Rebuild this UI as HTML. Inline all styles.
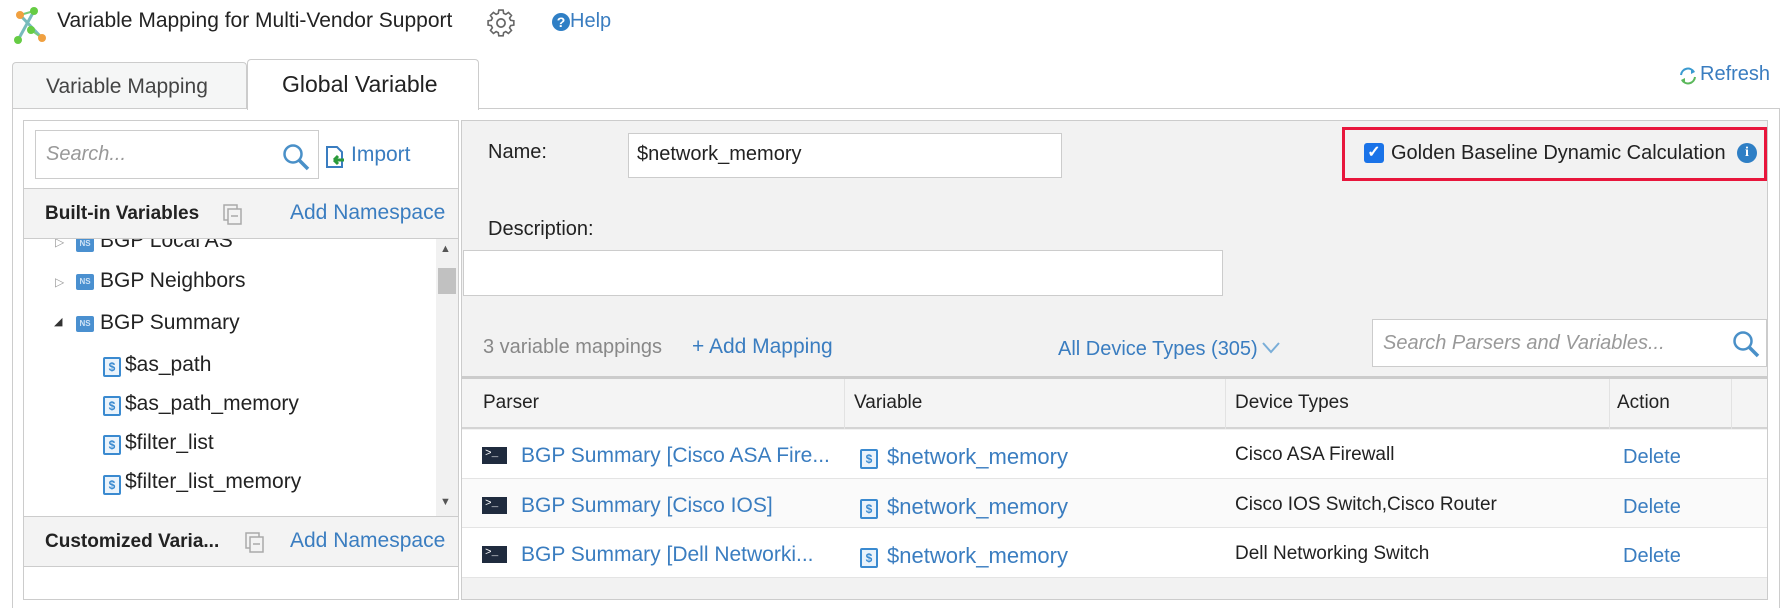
<!DOCTYPE html>
<html><head><meta charset="utf-8"><style>
*{box-sizing:border-box;margin:0;padding:0}
body{width:1788px;height:593px;overflow:hidden;background:#fff;font-family:"Liberation Sans",Arial,sans-serif;color:#222;position:relative}
.a{position:absolute;white-space:nowrap}
.blue{color:#3a7dc0}
.ns{position:absolute;width:18px;height:16px;background:#4a90d0;border-radius:2px;color:#cfe3f6;font-size:8px;font-weight:bold;text-align:center;line-height:16px}
.s{position:absolute;width:18px;height:20px;border:2px solid #3a8ad0;border-radius:2px;background:#eaf3fb;color:#3a8ad0;font-size:12px;font-weight:bold;text-align:center;line-height:16px}
.term{position:absolute;width:25px;height:17px;background:#1f2b3e;color:#fff;font-size:11px;line-height:15px;padding-left:3px;font-family:"Liberation Mono",monospace}
.line{position:absolute;background:#ddd}
</style></head><body>
<svg class="a" style="left:12px;top:6px" width="38" height="40" viewBox="0 0 38 40">
<line x1="8" y1="9" x2="30" y2="32" stroke="#7bb" stroke-width="3"/><line x1="22" y1="5" x2="6" y2="34" stroke="#7bb" stroke-width="3"/><line x1="8" y1="9" x2="22" y2="5" stroke="#7c7" stroke-width="2"/><line x1="19" y1="24" x2="30" y2="32" stroke="#7c7" stroke-width="2"/>
<circle cx="8" cy="9" r="4" fill="#f0a040"/><circle cx="22" cy="5" r="4" fill="#6c4"/><circle cx="19" cy="24" r="4" fill="#6c4"/><circle cx="6" cy="34" r="4" fill="#6c4"/><circle cx="30" cy="32" r="4" fill="#f0a040"/></svg>
<div class="a" style="left:57px;top:9px;font-size:21px">Variable Mapping for Multi-Vendor Support</div>
<svg class="a" style="left:487px;top:9px" width="28" height="28" viewBox="0 0 24 24"><path fill="none" stroke="#666" stroke-width="1.5" d="M10 2h4l.5 3 2 1 2.5-1.8 2.8 2.8L20 9.5l1 2 3 .5v4l-3 .5-1 2 1.8 2.5-2.8 2.8-2.5-1.8-2 1-.5 3h-4l-.5-3-2-1-2.5 1.8-2.8-2.8L4 18.5l-1-2-3-.5v-4l3-.5 1-2L2.2 7 5 4.2 7.5 6l2-1z" transform="scale(.92) translate(1 -1)"/><circle cx="12" cy="12" r="3.5" fill="none" stroke="#666" stroke-width="1.5"/></svg>
<div class="a" style="left:552px;top:13px;width:18px;height:18px;border-radius:50%;background:#2f7fc5;color:#fff;font-size:14px;font-weight:bold;text-align:center;line-height:18px">?</div>
<div class="a blue" style="left:570px;top:10px;font-size:20px">Help</div>
<div class="a" style="left:12px;top:62px;width:235px;height:47px;background:#f5f6f6;border:1px solid #ccc;border-bottom:none;border-radius:4px 4px 0 0"></div>
<div class="a" style="left:46px;top:75px;font-size:21px;color:#444">Variable Mapping</div>
<div class="line" style="left:12px;top:108px;width:1768px;height:1px;background:#ccc"></div>
<div class="a" style="left:247px;top:59px;width:232px;height:51px;background:#fff;border:1px solid #ccc;border-bottom:none;border-radius:4px 4px 0 0"></div>
<div class="a" style="left:282px;top:71px;font-size:23px">Global Variable</div>
<svg class="a" style="left:1678px;top:66px" width="20" height="20" viewBox="0 0 20 20"><path d="M3 9A7 7 0 0 1 16 6" fill="none" stroke="#3a9ad0" stroke-width="2"/><path d="M17 11A7 7 0 0 1 4 14" fill="none" stroke="#5bb85b" stroke-width="2"/><path d="M13 3l4 3-4 2z" fill="#3a9ad0"/><path d="M7 17l-4-3 4-2z" fill="#5bb85b"/></svg>
<div class="a blue" style="left:1700px;top:63px;font-size:20px">Refresh</div>
<div class="a" style="left:12px;top:108px;width:1768px;height:500px;border-left:1px solid #ccc;border-right:1px solid #ccc"></div>
<div class="a" style="left:23px;top:120px;width:436px;height:480px;border:1px solid #ccc;background:#fff"></div>
<div class="a" style="left:35px;top:130px;width:284px;height:49px;border:1px solid #ccc;background:#fff"></div>
<div class="a" style="left:46px;top:143px;font-size:20px;font-style:italic;color:#999">Search...</div>
<svg class="a" style="left:282px;top:143px" width="28" height="28" viewBox="0 0 28 28"><circle cx="11" cy="11" r="8.5" fill="none" stroke="#4a90c8" stroke-width="2.5"/><line x1="17" y1="17" x2="26" y2="26" stroke="#4a90c8" stroke-width="3.5"/></svg>
<svg class="a" style="left:325px;top:146px" width="22" height="22" viewBox="0 0 22 22"><path d="M2 1h10l5 5v15H2z" fill="#fff" stroke="#3a7dc0" stroke-width="2"/><path d="M9 14h10M9 14l4-4M9 14l4 4" stroke="#2a9a3a" stroke-width="3" fill="none"/></svg>
<div class="a blue" style="left:351px;top:143px;font-size:21px">Import</div>
<div class="a" style="left:24px;top:188px;width:434px;height:51px;background:#f3f3f3;border-top:1px solid #ccc;border-bottom:1px solid #ccc"></div>
<div class="a" style="left:45px;top:203px;font-size:19px;font-weight:bold">Built-in Variables</div>
<svg class="a" style="left:223px;top:204px" width="20" height="22"><rect x="1" y="1" width="13" height="15" fill="none" stroke="#aaa" stroke-width="1.5"/><rect x="5" y="5" width="13" height="15" fill="#f3f3f3" stroke="#aaa" stroke-width="1.5"/><line x1="8" y1="12" x2="15" y2="12" stroke="#aaa" stroke-width="1.5"/></svg>
<div class="a blue" style="left:290px;top:201px;font-size:21px">Add Namespace</div>
<div class="a" style="left:24px;top:239px;width:412px;height:277px;overflow:hidden">
  <div class="a" style="left:31px;top:-4px;color:#999;font-size:12px">▷</div><div class="ns" style="left:52px;top:-3px">NS</div><div class="a" style="left:76px;top:-10px;font-size:21px">BGP Local AS</div>
  <div class="a" style="left:31px;top:36px;color:#999;font-size:12px">▷</div><div class="ns" style="left:52px;top:35px">NS</div><div class="a" style="left:76px;top:30px;font-size:21px">BGP Neighbors</div>
  <div class="a" style="left:30px;top:76px;color:#333;font-size:11px">◢</div><div class="ns" style="left:52px;top:77px">NS</div><div class="a" style="left:76px;top:72px;font-size:21px">BGP Summary</div>
  <div class="s" style="left:79px;top:118px">$</div><div class="a" style="left:101px;top:114px;font-size:21px">$as_path</div>
  <div class="s" style="left:79px;top:157px">$</div><div class="a" style="left:101px;top:153px;font-size:21px">$as_path_memory</div>
  <div class="s" style="left:79px;top:196px">$</div><div class="a" style="left:101px;top:192px;font-size:21px">$filter_list</div>
  <div class="s" style="left:79px;top:236px">$</div><div class="a" style="left:101px;top:231px;font-size:21px">$filter_list_memory</div>
</div>
<div class="a" style="left:436px;top:239px;width:22px;height:277px;background:#f1f1f1"></div>
<div class="a" style="left:440px;top:243px;font-size:11px;color:#555">▲</div>
<div class="a" style="left:438px;top:268px;width:18px;height:26px;background:#c1c1c1"></div>
<div class="a" style="left:440px;top:496px;font-size:11px;color:#555">▼</div>
<div class="a" style="left:24px;top:516px;width:434px;height:51px;background:#f3f3f3;border-top:1px solid #ccc;border-bottom:1px solid #ccc"></div>
<div class="a" style="left:45px;top:531px;font-size:19px;font-weight:bold">Customized Varia...</div>
<svg class="a" style="left:245px;top:532px" width="20" height="22"><rect x="1" y="1" width="13" height="15" fill="none" stroke="#aaa" stroke-width="1.5"/><rect x="5" y="5" width="13" height="15" fill="#f3f3f3" stroke="#aaa" stroke-width="1.5"/><line x1="8" y1="12" x2="15" y2="12" stroke="#aaa" stroke-width="1.5"/></svg>
<div class="a blue" style="left:290px;top:529px;font-size:21px">Add Namespace</div>
<div class="a" style="left:461px;top:120px;width:1307px;height:480px;background:#f2f2f2;border:1px solid #ccc"></div>
<div class="a" style="left:488px;top:141px;font-size:20px">Name:</div>
<div class="a" style="left:628px;top:133px;width:434px;height:45px;background:#fff;border:1px solid #ccc"></div>
<div class="a" style="left:637px;top:143px;font-size:20px">$network_memory</div>
<div class="a" style="left:488px;top:218px;font-size:20px">Description:</div>
<div class="a" style="left:463px;top:250px;width:760px;height:46px;background:#fff;border:1px solid #ccc"></div>
<div class="a" style="left:1342px;top:127px;width:425px;height:54px;border:3px solid #e8163c"></div>
<div class="a" style="left:1364px;top:143px;width:20px;height:20px;background:#1a73e8;border-radius:3px;color:#fff;font-size:16px;font-weight:bold;text-align:center;line-height:20px">✓</div>
<div class="a" style="left:1391px;top:142px;font-size:20px">Golden Baseline Dynamic Calculation</div>
<div class="a" style="left:1737px;top:143px;width:20px;height:20px;border-radius:50%;background:#2f7fc5;color:#fff;font-size:14px;font-weight:bold;text-align:center;line-height:20px;font-family:'Liberation Serif',serif">i</div>
<div class="a" style="left:483px;top:336px;font-size:20px;color:#888">3 variable mappings</div>
<div class="a blue" style="left:692px;top:335px;font-size:21px">+ Add Mapping</div>
<div class="a blue" style="left:1058px;top:338px;font-size:20px">All Device Types (305)</div>
<svg class="a" style="left:1262px;top:342px" width="18" height="12"><path d="M1 1l8 9 8-9" fill="none" stroke="#7aaed8" stroke-width="2"/></svg>
<div class="a" style="left:1372px;top:319px;width:395px;height:48px;background:#fff;border:1px solid #ccc"></div>
<div class="a" style="left:1383px;top:332px;font-size:20px;font-style:italic;color:#999">Search Parsers and Variables...</div>
<svg class="a" style="left:1732px;top:330px" width="28" height="28" viewBox="0 0 28 28"><circle cx="11" cy="11" r="8.5" fill="none" stroke="#4a90c8" stroke-width="2.5"/><line x1="17" y1="17" x2="26" y2="26" stroke="#4a90c8" stroke-width="3.5"/></svg>
<div class="a" style="left:462px;top:376px;width:1305px;height:3px;background:#ccc"></div>
<div class="a" style="left:462px;top:379px;width:1305px;height:50px;background:#f4f4f4;border-bottom:2px solid #d4d4d4"></div>
<div class="line" style="left:844px;top:379px;width:1px;height:50px;background:#e2e2e2"></div>
<div class="line" style="left:1225px;top:379px;width:1px;height:50px;background:#e2e2e2"></div>
<div class="line" style="left:1609px;top:379px;width:1px;height:50px;background:#e2e2e2"></div>
<div class="line" style="left:1731px;top:379px;width:1px;height:50px;background:#e2e2e2"></div>
<div class="a" style="left:483px;top:392px;font-size:19px">Parser</div>
<div class="a" style="left:854px;top:392px;font-size:19px">Variable</div>
<div class="a" style="left:1235px;top:392px;font-size:19px">Device Types</div>
<div class="a" style="left:1617px;top:392px;font-size:19px">Action</div>
<div class="a" style="left:462px;top:430px;width:1305px;height:49px;background:#fff;border-bottom:1px solid #e4e4e4"></div>
<div class="a" style="left:462px;top:479px;width:1305px;height:49px;background:#fafafa;border-bottom:1px solid #e4e4e4"></div>
<div class="a" style="left:462px;top:528px;width:1305px;height:50px;background:#fff;border-bottom:1px solid #e4e4e4"></div>
<div class="term" style="left:482px;top:447px">&gt;_</div>
<div class="a blue" style="left:521px;top:444px;font-size:21px">BGP Summary [Cisco ASA Fire...</div>
<div class="s" style="left:860px;top:449px">$</div><div class="a blue" style="left:887px;top:444px;font-size:22px">$network_memory</div>
<div class="a" style="left:1235px;top:444px;font-size:19px">Cisco ASA Firewall</div>
<div class="a blue" style="left:1623px;top:446px;font-size:20px">Delete</div>
<div class="term" style="left:482px;top:497px">&gt;_</div>
<div class="a blue" style="left:521px;top:494px;font-size:21px">BGP Summary [Cisco IOS]</div>
<div class="s" style="left:860px;top:499px">$</div><div class="a blue" style="left:887px;top:494px;font-size:22px">$network_memory</div>
<div class="a" style="left:1235px;top:494px;font-size:19px">Cisco IOS Switch,Cisco Router</div>
<div class="a blue" style="left:1623px;top:496px;font-size:20px">Delete</div>
<div class="term" style="left:482px;top:546px">&gt;_</div>
<div class="a blue" style="left:521px;top:543px;font-size:21px">BGP Summary [Dell Networki...</div>
<div class="s" style="left:860px;top:548px">$</div><div class="a blue" style="left:887px;top:543px;font-size:22px">$network_memory</div>
<div class="a" style="left:1235px;top:543px;font-size:19px">Dell Networking Switch</div>
<div class="a blue" style="left:1623px;top:545px;font-size:20px">Delete</div>
</body></html>
